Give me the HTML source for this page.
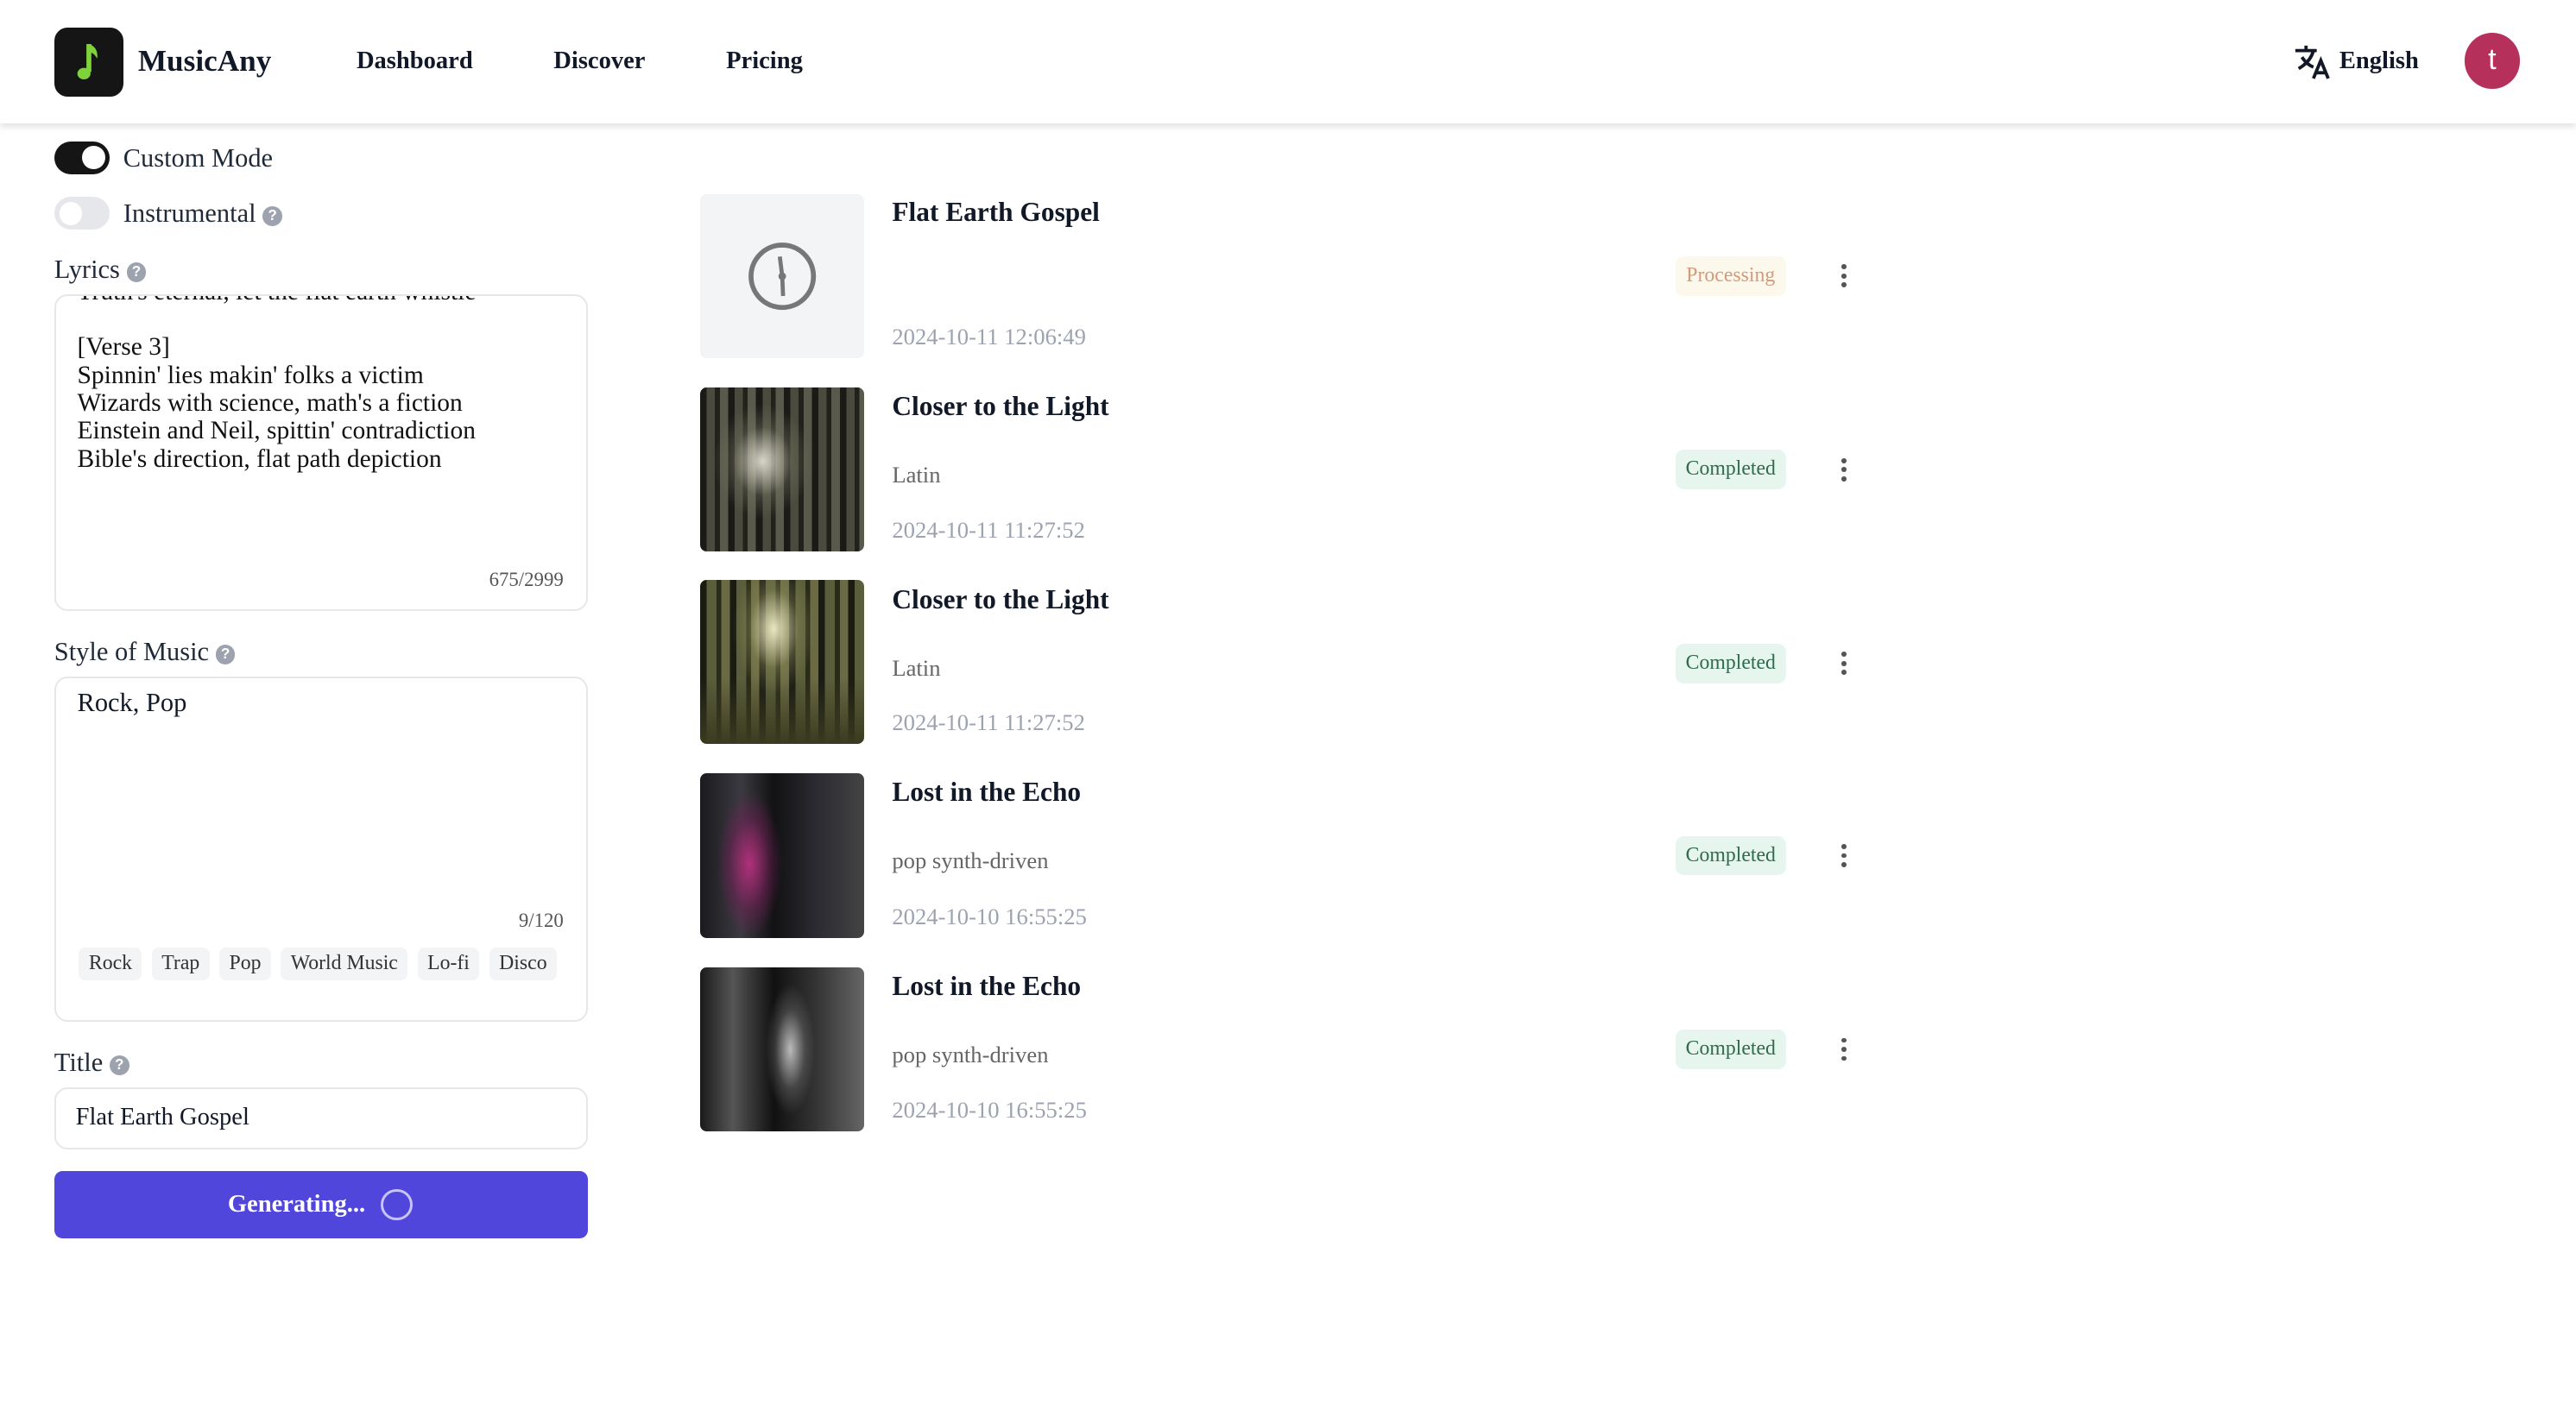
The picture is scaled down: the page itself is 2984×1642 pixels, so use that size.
<!DOCTYPE html>
<html><head><meta charset="utf-8"><style>
html,body{margin:0;padding:0;background:#fff}
body{width:1568px;height:863px;zoom:1.903;position:relative;overflow:hidden;font-family:"Liberation Serif",serif;color:#111827}
.a{position:absolute}
.hdr{left:0;top:0;width:1568px;height:75px;background:#fff;box-shadow:0 2px 4px rgba(0,0,0,.12)}
.nav{font-weight:bold;font-size:15px;top:29px}
.lbl{font-size:16px;color:#1f2937}
.q{display:inline-block;width:12px;height:12px;border-radius:50%;background:#9ca3af;color:#fff;font:bold 9px/12px "Liberation Sans",sans-serif;text-align:center;vertical-align:1px;margin-left:4px}
.ta{border:1.5px solid #e5e7eb;border-radius:8px;background:#fff;overflow:hidden}
.chip{display:inline-block;background:#f3f4f6;border-radius:4px;font-size:12.5px;padding:3px 6px;margin-right:6px;color:#333}
.th{left:426px;width:100px;height:100px;border-radius:4px;overflow:hidden}
.tt{left:543px;font-size:16.5px;font-weight:bold}
.sub{left:543px;font-size:14px;color:#666}
.dt{left:543px;font-size:14px;color:#9ca3af}
.bd{left:1020px;width:67px;height:24px;border-radius:5px;font-size:12.5px;line-height:24px;text-align:center}
.dots{left:1121px;width:4px}
.dots i{display:block;width:3px;height:3px;border-radius:50%;background:#555;margin-bottom:2.5px}
</style></head><body>
<div class="a hdr"></div>
<div class="a" style="left:33px;top:17px;width:42px;height:42px;border-radius:8px;background:#151515">
<svg width="42" height="42" viewBox="0 0 42 42"><path d="M21 10 L21 27" stroke="#7fd33a" stroke-width="3"/><path d="M21 10 Q27 12 26 19 Q24 15 21 15Z" fill="#7fd33a"/><ellipse cx="18" cy="28" rx="4" ry="3.5" fill="#7fd33a"/></svg></div>
<div class="a" style="left:84px;top:27px;font-size:18.5px;font-weight:bold">MusicAny</div>
<div class="a nav" style="left:217px">Dashboard</div>
<div class="a nav" style="left:337px">Discover</div>
<div class="a nav" style="left:442px">Pricing</div>
<svg class="a" style="left:1396px;top:27px" width="24" height="22" viewBox="0 0 24 22"><path d="M1 4h13M7.5 1v3M3 15c5-3 8-7 9-11M5 8c2 3 4 5 7 6" stroke="#111827" stroke-width="2" fill="none"/><path d="M12 21l4.5-11 4.5 11M13.5 17.5h6" stroke="#111827" stroke-width="2" fill="none"/></svg>
<div class="a nav" style="left:1424px">English</div>
<div class="a" style="left:1500px;top:20px;width:34px;height:34px;border-radius:50%;background:#b5305a;color:#fff;font:18px/33px 'Liberation Sans',sans-serif;text-align:center">t</div>

<div class="a" style="left:33px;top:86px;width:34px;height:20px;border-radius:10px;background:#151515"><div style="position:absolute;right:3px;top:3px;width:14px;height:14px;border-radius:50%;background:#fff"></div></div>
<div class="a lbl" style="left:75px;top:87px">Custom Mode</div>
<div class="a" style="left:33px;top:120px;width:34px;height:20px;border-radius:10px;background:#e5e7eb"><div style="position:absolute;left:3px;top:3px;width:14px;height:14px;border-radius:50%;background:#fff"></div></div>
<div class="a lbl" style="left:75px;top:121px">Instrumental<span class="q">?</span></div>
<div class="a lbl" style="left:33px;top:155px">Lyrics<span class="q">?</span></div>
<div class="a ta" style="left:33px;top:179px;width:323px;height:191px">
<div style="position:absolute;left:13px;top:-11px;font-size:15.5px;line-height:17px;color:#111">Truth's eternal, let the flat earth whistle<br><br>[Verse 3]<br>Spinnin' lies makin' folks a victim<br>Wizards with science, math's a fiction<br>Einstein and Neil, spittin' contradiction<br>Bible's direction, flat path depiction</div>
<div style="position:absolute;right:14px;top:166px;font-size:12px;color:#555">675/2999</div></div>
<div class="a lbl" style="left:33px;top:388px">Style of Music<span class="q">?</span></div>
<div class="a ta" style="left:33px;top:412px;width:323px;height:208px">
<div style="position:absolute;left:13px;top:6px;font-size:16px">Rock, Pop</div>
<div style="position:absolute;right:14px;top:141px;font-size:12px;color:#555">9/120</div>
<div style="position:absolute;left:14px;top:163px;white-space:nowrap"><span class="chip">Rock</span><span class="chip">Trap</span><span class="chip">Pop</span><span class="chip">World Music</span><span class="chip">Lo-fi</span><span class="chip" style="margin:0">Disco</span></div></div>
<div class="a lbl" style="left:33px;top:638px">Title<span class="q">?</span></div>
<div class="a ta" style="left:33px;top:662px;width:323px;height:36px"><div style="position:absolute;left:12px;top:9px;font-size:15px">Flat Earth Gospel</div></div>
<div class="a" style="left:33px;top:713px;width:325px;height:41px;border-radius:5px;background:#5046dc;color:#fff;font-weight:bold;font-size:15px;line-height:41px;text-align:center"><span style="position:relative;left:-15px">Generating...</span><span style="position:absolute;left:199px;top:11px;width:19px;height:19px;border:2px solid #c7c3f5;border-radius:50%;box-sizing:border-box"></span></div>

<div class="a th" style="top:118px;background:#f3f4f6"><svg width="100" height="100"><circle cx="50" cy="50" r="19" stroke="#777" stroke-width="3" fill="none"/><path d="M48.5 38L50 50 50.5 62" stroke="#777" stroke-width="2.5"/><circle cx="50" cy="50" r="2.3" fill="#777"/></svg></div>
<div class="a tt" style="top:120px">Flat Earth Gospel</div>
<div class="a dt" style="top:197px">2024-10-11 12:06:49</div>
<div class="a bd" style="top:156px;background:#fdf8ec;color:#d49a7a">Processing</div>
<div class="a dots" style="top:161px"><i></i><i></i><i></i></div>

<div class="a th" style="top:236px;background:radial-gradient(ellipse 30% 35% at 38% 45%,#d8d6c8,rgba(120,120,100,.4) 60%,transparent),repeating-linear-gradient(90deg,#1a1a16 0 4px,#4a4a3e 4px 9px,#22221c 9px 12px,#5a5a4c 12px 17px),#333"></div>
<div class="a tt" style="top:238px">Closer to the Light</div>
<div class="a sub" style="top:281px">Latin</div>
<div class="a dt" style="top:315px">2024-10-11 11:27:52</div>
<div class="a bd" style="top:274px;background:#e6f6ee;color:#2f6b4c">Completed</div>
<div class="a dots" style="top:279px"><i></i><i></i><i></i></div>

<div class="a th" style="top:353px;background:radial-gradient(ellipse 25% 40% at 45% 30%,#e8e6c0,rgba(140,140,90,.4) 60%,transparent),linear-gradient(180deg,transparent 60%,#3a3a20),repeating-linear-gradient(90deg,#1a1c12 0 4px,#5a5e3a 4px 10px,#2a2c1a 10px 13px,#6a6a44 13px 18px)"></div>
<div class="a tt" style="top:356px">Closer to the Light</div>
<div class="a sub" style="top:399px">Latin</div>
<div class="a dt" style="top:432px">2024-10-11 11:27:52</div>
<div class="a bd" style="top:392px;background:#e6f6ee;color:#2f6b4c">Completed</div>
<div class="a dots" style="top:397px"><i></i><i></i><i></i></div>

<div class="a th" style="top:471px;background:radial-gradient(ellipse 20% 45% at 30% 55%,#b0307a,rgba(120,30,90,.5) 60%,transparent),linear-gradient(90deg,#1a1a1e 0,#3a3a40 25%,#121214 45%,#2a2a30 70%,#444 100%)"></div>
<div class="a tt" style="top:473px">Lost in the Echo</div>
<div class="a sub" style="top:516px">pop synth-driven</div>
<div class="a dt" style="top:550px">2024-10-10 16:55:25</div>
<div class="a bd" style="top:509px;background:#e6f6ee;color:#2f6b4c">Completed</div>
<div class="a dots" style="top:514px"><i></i><i></i><i></i></div>

<div class="a th" style="top:589px;background:radial-gradient(ellipse 15% 40% at 55% 50%,#bbb,rgba(120,120,120,.4) 60%,transparent),linear-gradient(90deg,#1a1a1a 0,#555 20%,#111 45%,#333 70%,#666 100%)"></div>
<div class="a tt" style="top:591px">Lost in the Echo</div>
<div class="a sub" style="top:634px">pop synth-driven</div>
<div class="a dt" style="top:668px">2024-10-10 16:55:25</div>
<div class="a bd" style="top:627px;background:#e6f6ee;color:#2f6b4c">Completed</div>
<div class="a dots" style="top:632px"><i></i><i></i><i></i></div>
</body></html>
